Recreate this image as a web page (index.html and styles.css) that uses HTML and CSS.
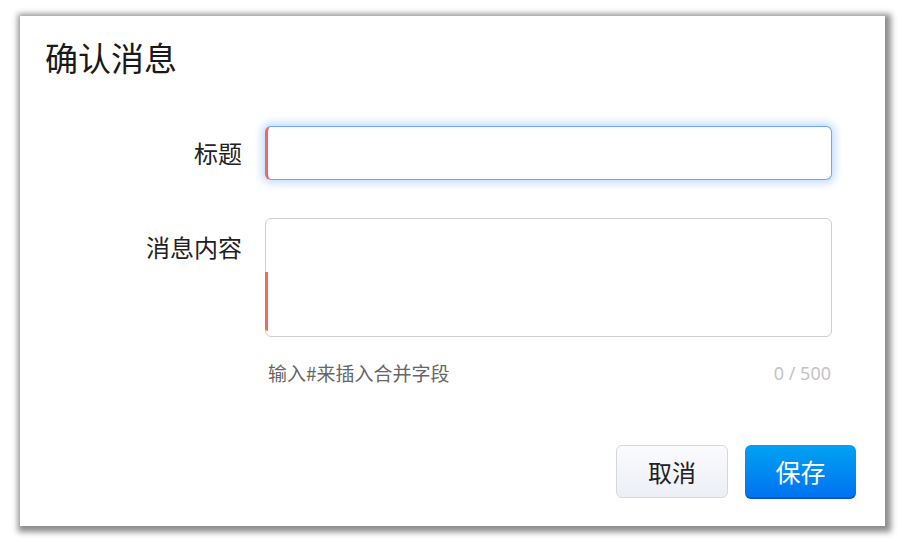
FILE: index.html
```html
<!DOCTYPE html>
<html lang="zh-CN">
<head>
<meta charset="utf-8">
<title>确认消息</title>
<link rel="stylesheet" href="styles.css">
</head>
<body>
<div class="dialog">
  <h1 class="title">确认消息</h1>
  <div class="form">
    <div class="row row-title">
      <label class="label">标题</label>
      <div class="field input focused"></div>
    </div>
    <div class="row row-body">
      <label class="label label-top">消息内容</label>
      <div class="field-wrap">
        <div class="field textarea"><span class="mark"></span></div>
        <div class="hint">
          <span class="hint-text">输入#来插入合并字段</span>
          <span class="count">0 / 500</span>
        </div>
      </div>
    </div>
  </div>
  <div class="actions">
    <button class="btn btn-cancel">取消</button>
    <button class="btn btn-save">保存</button>
  </div>
</div>
</body>
</html>
```
FILE: styles.css
```css
html, body {
  margin: 0;
  padding: 0;
  background: #ffffff;
  font-family: "Noto Sans CJK SC", "Noto Sans", sans-serif;
}
body {
  padding: 16px 0 16px 20px;
  min-height: 542px;
  box-sizing: border-box;
}
.dialog {
  width: 865px;
  height: 510px;
  box-sizing: border-box;
  background: #ffffff;
  box-shadow: 2px 2px 6px 4px rgba(0, 0, 0, 0.45);
  padding: 21px 29px 0 25px;
  display: flex;
  flex-direction: column;
}
.title {
  margin: 0;
  font-size: 33px;
  font-weight: 400;
  line-height: 41px;
  color: #1a1a1a;
}
.form {
  margin-top: 48px;
  display: flex;
  flex-direction: column;
  gap: 38px;
}
.row {
  display: grid;
  grid-template-columns: 197px 567px;
  column-gap: 23px;
}
.row-title {
  align-items: center;
}
.label {
  text-align: right;
  font-size: 24px;
  line-height: 32px;
  color: #222;
}
.label-top {
  padding-top: 13px;
}
.field {
  box-sizing: border-box;
  border-radius: 6px;
  background: #fff;
  position: relative;
}
.input {
  height: 54px;
  border: 1.5px solid #6ea8f2;
  border-left: 3px solid #ef6a62;
  box-shadow: 0 0 8px 3px rgba(100, 160, 250, 0.4);
}
.textarea {
  height: 119px;
  border: 1px solid #cfcfcf;
}
.mark {
  position: absolute;
  left: -1px;
  top: 53px;
  bottom: 5px;
  width: 3px;
  background: #ef6a62;
  border-bottom-left-radius: 3px;
}
.hint {
  margin-top: 24px;
  display: flex;
  justify-content: space-between;
  align-items: center;
  line-height: 24px;
  padding: 0 1px 0 3px;
}
.hint-text {
  font-size: 19px;
  color: #666;
}
.count {
  font-size: 18px;
  color: #c4c4c4;
  font-family: "Noto Sans", "Open Sans", sans-serif;
}
.actions {
  margin-top: 60px;
  display: flex;
  justify-content: flex-end;
  gap: 17px;
}
.btn {
  height: 54px;
  border-radius: 6px;
  font-family: "Noto Sans CJK SC", "Noto Sans", sans-serif;
  font-size: 24px;
  padding: 0;
  cursor: pointer;
}
.btn-cancel {
  width: 112px;
  height: 53px;
  border: 1px solid #d4d7de;
  background: linear-gradient(#fbfbfd, #eceff5);
  color: #222;
}
.btn-save {
  width: 111px;
  border: none;
  border-bottom: 2px solid #0058c8;
  background: linear-gradient(#00a2f2, #0073f0);
  color: #fff;
  font-size: 25px;
}
```
